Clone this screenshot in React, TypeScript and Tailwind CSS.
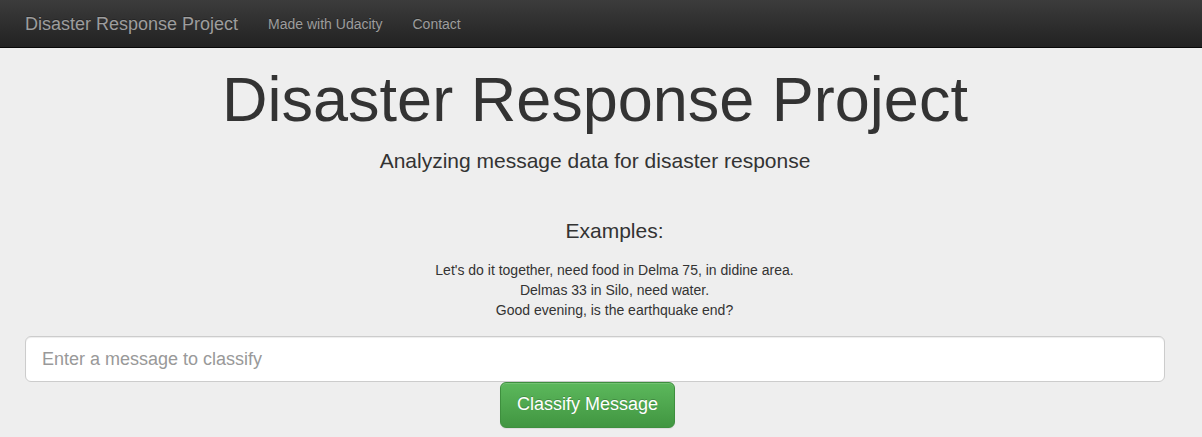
const examples = [
  "Let's do it together, need food in Delma 75, in didine area.",
  "Delmas 33 in Silo, need water.",
  "Good evening, is the earthquake end?",
];

function Navbar() {
  return (
    <nav className="flex h-[48px] items-center border-b border-[#080808] bg-gradient-to-b from-[#3c3c3c] to-[#222222] pl-[25px]">
      <a className="text-[18px] leading-[20px] text-[#9d9d9d] [text-shadow:0_-1px_0_rgba(0,0,0,0.25)]" href="#">
        Disaster Response Project
      </a>
      <a className="ml-[30px] text-[14px] leading-[20px] text-[#9d9d9d] [text-shadow:0_-1px_0_rgba(0,0,0,0.25)]" href="#">
        Made with Udacity
      </a>
      <a className="ml-[30px] text-[14px] leading-[20px] text-[#9d9d9d] [text-shadow:0_-1px_0_rgba(0,0,0,0.25)]" href="#">
        Contact
      </a>
    </nav>
  );
}

export default function App() {
  return (
    <div className="min-h-[437px] bg-[#eeeeee] font-['Liberation_Sans',Arial,sans-serif] text-[#333333]">
      <Navbar />
      <div className="flex flex-col items-center pr-[12px]">
        <h1 className="mt-[17px] text-[63px] leading-[1.1]">Disaster Response Project</h1>
        <p className="mt-[12px] text-[21px] leading-[30px] font-extralight">
          Analyzing message data for disaster response
        </p>
      </div>
      <div className="flex flex-col items-center pl-[27px]">
        <h3 className="mt-[40px] text-[21px] leading-[30px]">Examples:</h3>
        <div className="mt-[14px] text-center text-[14px] leading-[20px]">
          {examples.map((line) => (
            <p key={line}>{line}</p>
          ))}
        </div>
      </div>
      <div className="mt-[16px] pl-[25px]">
        <input
          type="text"
          placeholder="Enter a message to classify"
          className="box-border block h-[46px] w-[1140px] rounded-[6px] border border-[#cccccc] bg-white px-[16px] text-[18px] text-[#555555] shadow-[inset_0_1px_1px_rgba(0,0,0,0.075)] outline-none placeholder:text-[#999999]"
        />
        <div className="pl-[475px]">
          <button className="h-[46px] rounded-[6px] border border-[#3e8f3e] bg-gradient-to-b from-[#5cb85c] to-[#419641] px-[16px] text-[18px] leading-[1.33] text-white shadow-[inset_0_1px_0_rgba(255,255,255,0.15),0_1px_1px_rgba(0,0,0,0.075)] [text-shadow:0_-1px_0_rgba(0,0,0,0.2)]">
            Classify Message
          </button>
        </div>
      </div>
    </div>
  );
}
